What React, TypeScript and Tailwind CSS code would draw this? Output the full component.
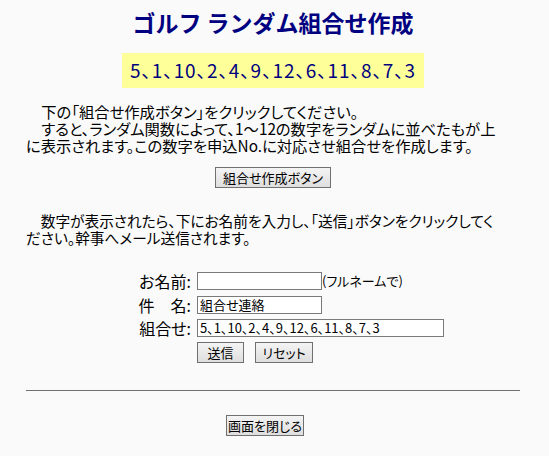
import React from "react";

const order = "5、1、10、2、4、9、12、6、11、8、7、3";
const sp = "\u3000";

function Btn({ children, className = "" }: { children: React.ReactNode; className?: string }) {
  return (
    <button
      type="button"
      className={`h-[21px] border border-[#707070] bg-gradient-to-b from-[#f4f4f4] to-[#dedede] text-[13px] leading-none text-black ${className}`}
    >
      {children}
    </button>
  );
}

export default function App() {
  return (
    <div className="min-h-[456px] w-[549px] bg-[#fafafa] text-black font-['Noto_Sans_CJK_JP',sans-serif] [font-feature-settings:'palt']">
      <div className="ml-[26px] w-[494px] pt-[8px]">
        {/* Title */}
        <h1 className="text-center text-[23px] font-bold leading-[28px] text-[#000080] [font-feature-settings:normal]">
          ゴルフ ランダム組合せ作成
        </h1>

        {/* Result */}
        <div className="mx-auto mt-[17px] flex h-[35px] w-[302px] items-center justify-center bg-[#ffff99] text-[19px] tracking-[0.9px] text-[#000080]">
          {order}
        </div>

        <p className="mt-[15px] whitespace-nowrap text-[15.3px] leading-[17px]">
          {sp}下の「組合せ作成ボタン」をクリックしてください。
          <br />
          {sp}すると、ランダム関数によって、1～12の数字をランダムに並べたもが上
          <br />
          に表示されます。この数字を申込No.に対応させ組合せを作成します。
        </p>

        <div className="mt-[13px] flex justify-center">
          <Btn className="w-[116px]">組合せ作成ボタン</Btn>
        </div>

        <p className="mt-[24px] whitespace-nowrap text-[14.7px] leading-[17px]">
          {sp}数字が表示されたら、下にお名前を入力し、「送信」ボタンをクリックしてく
          <br />
          ださい。幹事へメール送信されます。
        </p>

        {/* Form */}
        <div className="mt-[25px] grid grid-cols-[165px_1fr] items-center gap-x-[6px] gap-y-[5px] text-[16px]">
          <span className="text-right leading-[18px]">お名前:</span>
          <div className="flex items-center">
            <input className="h-[18px] w-[125px] border border-[#7a7a7a] bg-white px-[2px] text-[13px] outline-none" />
            <span className="text-[13px]">(フルネームで)</span>
          </div>

          <span className="text-right leading-[18px]">件{sp}名:</span>
          <input
            defaultValue="組合せ連絡"
            className="h-[18px] w-[125px] border border-[#7a7a7a] bg-white px-[2px] text-[13px] outline-none"
          />

          <span className="text-right leading-[18px]">組合せ:</span>
          <input
            defaultValue={order}
            className="h-[18px] w-[247px] border border-[#7a7a7a] bg-white px-[2px] text-[13px] outline-none"
          />

          <span />
          <div className="flex gap-[11px]">
            <Btn className="w-[47px]">送信</Btn>
            <Btn className="w-[58px]">リセット</Btn>
          </div>
        </div>

        <hr className="mt-[27px] border-t border-[#707070]" />

        <div className="mt-[24px] flex justify-center pr-[16px] pb-[18px]">
          <Btn className="w-[78px]">画面を閉じる</Btn>
        </div>
      </div>
    </div>
  );
}
